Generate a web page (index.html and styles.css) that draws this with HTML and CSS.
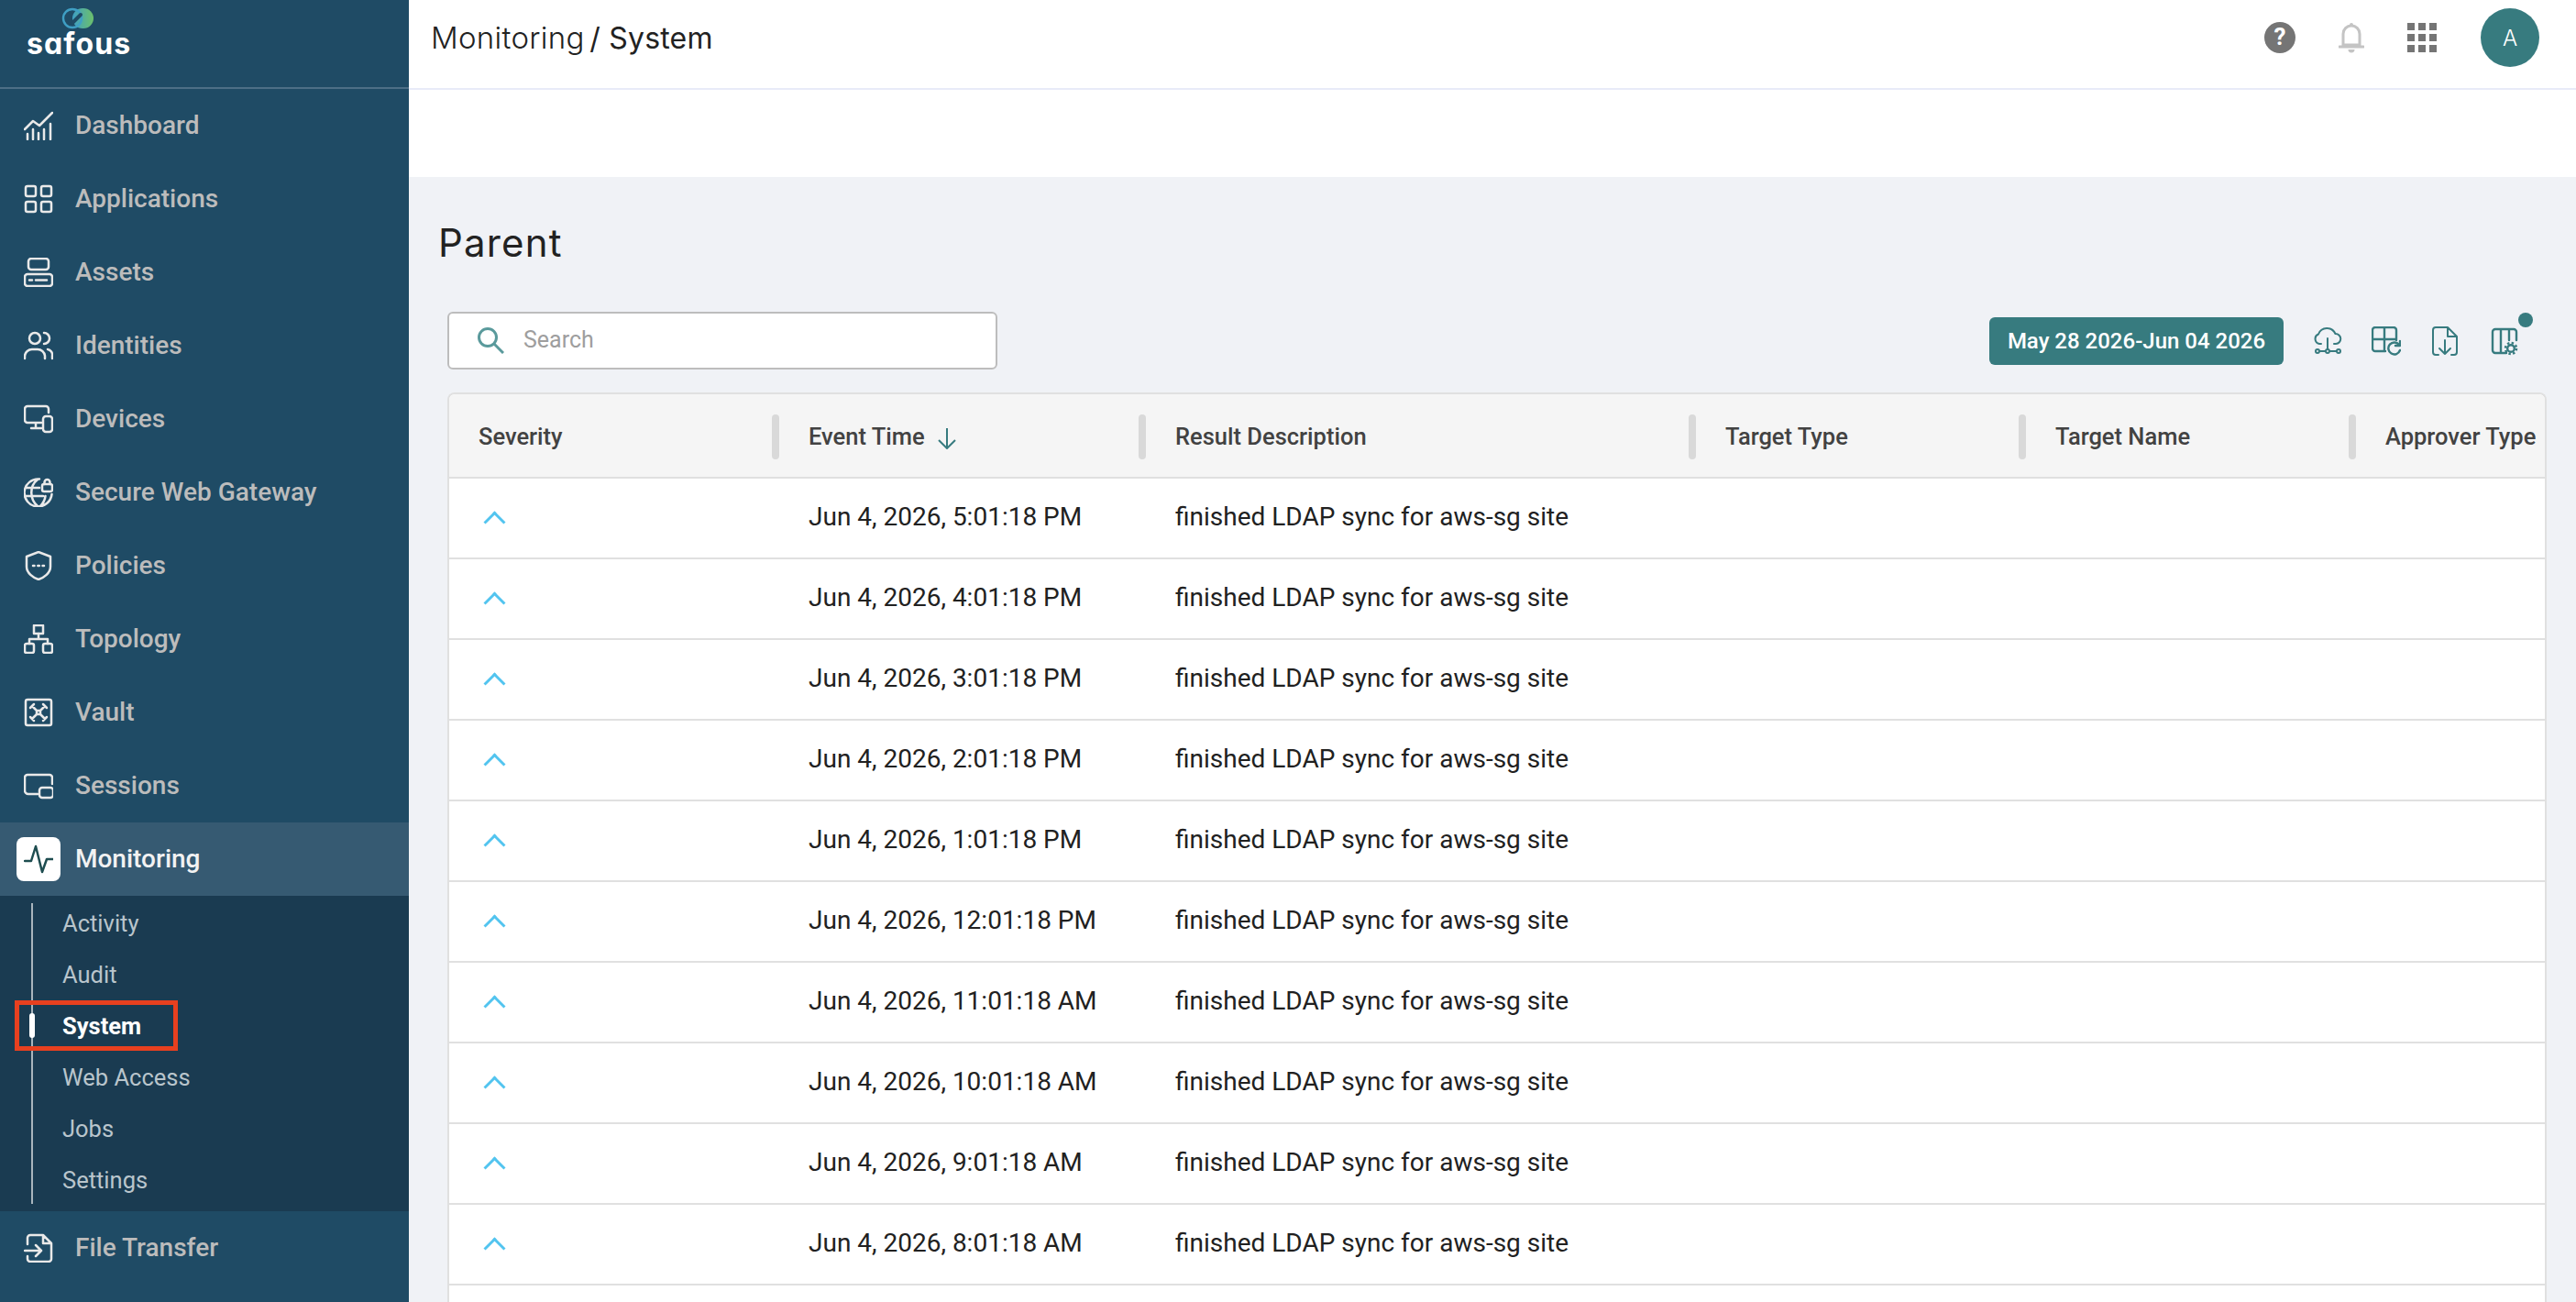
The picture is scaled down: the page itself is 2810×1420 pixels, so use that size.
FILE: index.html
```html
<!DOCTYPE html>
<html lang="en">
<head>
    <meta charset="UTF-8">
    <meta name="viewport" content="width=device-width, initial-scale=1.0">
    <title>Monitoring / System</title>
    <link rel="stylesheet" href="styles.css">
</head>
<body>
    <div class="app">
        <aside class="sidebar">
            <div class="brand">
                <svg class="brand-mark" viewBox="0 0 36 24" width="36" height="24">
                    <defs>
                        <linearGradient id="brandGrad" x1="0" y1="0" x2="1" y2="0">
                            <stop offset="0" stop-color="#3f9fc4"/>
                            <stop offset="1" stop-color="#6cc06b"/>
                        </linearGradient>
                    </defs>
                    <rect x="12" y="1" width="23" height="22" rx="11" fill="url(#brandGrad)"/>
                    <circle cx="12" cy="12" r="10" fill="none" stroke="#3f9fc4" stroke-width="2.4"/>
                    <path d="M12 17 L21 8" stroke="#1f4b65" stroke-width="4" stroke-linecap="round"/>
                </svg>
                <span class="brand-name">safous</span>
            </div>

            <nav class="nav">
                <a class="nav-item">
                    <svg class="nav-icon" viewBox="0 0 32 32"><path d="M1 20 10 11 17 16 31 2M4 25V31M10 20V31M16 24V31M22 20V31M29 14V31"/></svg>
                    Dashboard
                </a>
                <a class="nav-item">
                    <svg class="nav-icon" viewBox="0 0 32 32"><rect x="2" y="2" width="11" height="11" rx="2"/><rect x="19" y="2" width="11" height="11" rx="2"/><rect x="2" y="19" width="11" height="11" rx="2"/><rect x="19" y="19" width="11" height="11" rx="2"/></svg>
                    Applications
                </a>
                <a class="nav-item">
                    <svg class="nav-icon" viewBox="0 0 32 32"><rect x="5" y="1" width="22" height="12" rx="3"/><rect x="1" y="18" width="30" height="13" rx="3"/><path d="M6 24.500H9M13 24.500H25"/></svg>
                    Assets
                </a>
                <a class="nav-item">
                    <svg class="nav-icon" viewBox="0 0 32 32"><circle cx="12" cy="8" r="6"/><path d="M22 2a6 6 0 0 1 0 12M1 30v-3a8 8 0 0 1 8-7h6a8 8 0 0 1 8 7v3M26 20a6 6 0 0 1 5 7v3"/></svg>
                    Identities
                </a>
                <a class="nav-item">
                    <svg class="nav-icon" viewBox="0 0 32 32"><path d="M27 9V5a3 3 0 0 0-3-3H4a3 3 0 0 0-3 3v12a3 3 0 0 0 3 3h15M13 20v6M8 26h11"/><rect x="21" y="13" width="10" height="17" rx="3"/></svg>
                    Devices
                </a>
                <a class="nav-item">
                    <svg class="nav-icon" viewBox="0 0 32 32"><path d="M17 1.500A15 15 0 1 0 30.500 18M15 2C6 9 6 23 15 31M18 31c3-3 5-7 5.500-11M2 11h15M1 20h20"/><rect x="20" y="7" width="11" height="8" rx="2"/><path d="M22.500 7V5a3 3 0 0 1 6 0v2"/></svg>
                    Secure Web Gateway
                </a>
                <a class="nav-item">
                    <svg class="nav-icon" viewBox="0 0 32 32"><path d="M16 1 29 6V17C29 24 22 29 16 31 10 29 3 24 3 17V6Z"/><path d="M10 16h1.500M15.300 16h1.500M20.500 16h1.500"/></svg>
                    Policies
                </a>
                <a class="nav-item">
                    <svg class="nav-icon" viewBox="0 0 32 32"><rect x="11" y="1" width="10" height="9"/><rect x="1" y="21" width="10" height="10" rx="2"/><rect x="21" y="21" width="10" height="10" rx="2"/><path d="M16 10V16M6 21V16H26V21"/></svg>
                    Topology
                </a>
                <a class="nav-item">
                    <svg class="nav-icon" viewBox="0 0 32 32"><rect x="2" y="2" width="28" height="28" rx="2"/><path d="M9 9 14 14M23 9 18 14M9 23 14 18M23 23 18 18M7 11 11 7M21 7 25 11M7 21 11 25M21 25 25 21M14 14H18V18H14Z"/></svg>
                    Vault
                </a>
                <a class="nav-item">
                    <svg class="nav-icon" viewBox="0 0 32 32"><path d="M15 25H5a4 4 0 0 1-4-4V7a3 3 0 0 1 3-3h24a3 3 0 0 1 3 3v7"/><rect x="17" y="18" width="15" height="11" rx="3"/></svg>
                    Sessions
                </a>
                <a class="nav-item active">
                    <span class="nav-icon-box">
                        <svg class="nav-icon" viewBox="0 0 32 32"><path d="M1 18H8L13 2 20 30 25 16H32"/></svg>
                    </span>
                    Monitoring
                </a>
                <div class="sub-nav">
                    <a class="sub-item">Activity</a>
                    <a class="sub-item">Audit</a>
                    <a class="sub-item current">System<span class="callout"></span></a>
                    <a class="sub-item">Web Access</a>
                    <a class="sub-item">Jobs</a>
                    <a class="sub-item">Settings</a>
                </div>
                <a class="nav-item">
                    <svg class="nav-icon" viewBox="0 0 32 32"><path d="M4 12V5a3 3 0 0 1 3-3h14l9 9v17a3 3 0 0 1-3 3H7a3 3 0 0 1-3-3v-3M21 2v9h9M1 19H19M13 13 19 19 13 25"/></svg>
                    File Transfer
                </a>
            </nav>
        </aside>

        <div class="main">
            <header class="topbar">
                <div class="breadcrumb">Monitoring <span class="crumb-current">/ System</span></div>
                <div class="top-actions">
                    <svg class="top-icon" viewBox="0 0 34 34" width="34" height="34">
                        <circle cx="17" cy="17" r="17" fill="#757575"/>
                        <text x="17" y="25" text-anchor="middle" class="help-mark">?</text>
                    </svg>
                    <svg class="top-icon" viewBox="0 0 28 34" width="28" height="34">
                        <path d="M14 4a9 9 0 0 1 9 9v12H5V13a9 9 0 0 1 9-9Z" fill="none" stroke="#c4c4c4" stroke-width="3"/>
                        <path d="M1 27H27" stroke="#c4c4c4" stroke-width="3" stroke-linecap="round"/>
                        <rect x="12" y="1" width="4" height="4" rx="2" fill="#c4c4c4"/>
                        <path d="M10.500 30h7a3.500 3.500 0 0 1-7 0Z" fill="#c4c4c4"/>
                    </svg>
                    <div class="apps-grid">
                        <i></i><i></i><i></i><i></i><i></i><i></i><i></i><i></i><i></i>
                    </div>
                    <div class="avatar">A</div>
                </div>
            </header>
            <div class="top-strip"></div>

            <main class="content">
                <h1 class="page-title">Parent</h1>

                <div class="toolbar">
                    <label class="search">
                        <svg viewBox="0 0 30 30" width="30" height="30"><circle cx="12" cy="12" r="9.500" fill="none" stroke="#5a9a9c" stroke-width="3"/><path d="M19 19 29 29" stroke="#5a9a9c" stroke-width="3"/></svg>
                        <span class="search-text">Search</span>
                    </label>
                    <div class="tools">
                        <button class="date-btn">May 28 2026-Jun 04 2026</button>
                        <svg class="tool-icon" viewBox="0 0 32 32"><path d="M9 19H7A5.500 5.500 0 0 1 6 8.500 10 10 0 0 1 24.500 8 5.500 5.500 0 0 1 25 19H23M16 13V25M7 27H14M18 27H26"/><circle cx="5" cy="27" r="2"/><circle cx="16" cy="27" r="2"/><circle cx="28" cy="27" r="2"/></svg>
                        <svg class="tool-icon thick" viewBox="0 0 32 32"><path d="M15 27H4a3 3 0 0 1-3-3V4a3 3 0 0 1 3-3h20a3 3 0 0 1 3 3V15M1 14H27M14 1V27M30 20a6.500 6.500 0 1 0 1 6M31 16v5h-5"/></svg>
                        <svg class="tool-icon" viewBox="0 0 32 32"><path d="M9 31H6a3 3 0 0 1-3-3V4a3 3 0 0 1 3-3H19L29 11V28a3 3 0 0 1-3 3H23M19 1V11H29M16 15V30M10 24 16 30 22 24"/></svg>
                        <div class="col-settings">
                            <svg class="tool-icon thick" viewBox="0 0 32 32"><path d="M19 29H7a3 3 0 0 1-3-3V6a3 3 0 0 1 3-3H27a3 3 0 0 1 3 3V15M13 3V29M22 3V15"/><circle cx="24" cy="24" r="3.800"/><circle class="gear-teeth" cx="24" cy="24" r="6"/></svg>
                            <span class="tool-dot"></span>
                        </div>
                    </div>
                </div>

                <div class="table-card">
                    <table class="events">
                        <colgroup>
                            <col class="col-sev"><col class="col-time"><col class="col-desc"><col class="col-type"><col class="col-name"><col>
                        </colgroup>
                        <thead>
                            <tr>
                                <th>Severity</th>
                                <th>Event Time
                                    <svg class="sort-icon" viewBox="0 0 24 24" width="24" height="24"><path d="M12 1V23M3 14 12 23 21 14"/></svg>
                                </th>
                                <th>Result Description</th>
                                <th>Target Type</th>
                                <th>Target Name</th>
                                <th class="last">Approver Type</th>
                            </tr>
                        </thead>
                        <tbody>
                            <tr><td><span class="chev"></span></td><td>Jun 4, 2026, 5:01:18 PM</td><td>finished LDAP sync for aws-sg site</td><td></td><td></td><td></td></tr>
                            <tr><td><span class="chev"></span></td><td>Jun 4, 2026, 4:01:18 PM</td><td>finished LDAP sync for aws-sg site</td><td></td><td></td><td></td></tr>
                            <tr><td><span class="chev"></span></td><td>Jun 4, 2026, 3:01:18 PM</td><td>finished LDAP sync for aws-sg site</td><td></td><td></td><td></td></tr>
                            <tr><td><span class="chev"></span></td><td>Jun 4, 2026, 2:01:18 PM</td><td>finished LDAP sync for aws-sg site</td><td></td><td></td><td></td></tr>
                            <tr><td><span class="chev"></span></td><td>Jun 4, 2026, 1:01:18 PM</td><td>finished LDAP sync for aws-sg site</td><td></td><td></td><td></td></tr>
                            <tr><td><span class="chev"></span></td><td>Jun 4, 2026, 12:01:18 PM</td><td>finished LDAP sync for aws-sg site</td><td></td><td></td><td></td></tr>
                            <tr><td><span class="chev"></span></td><td>Jun 4, 2026, 11:01:18 AM</td><td>finished LDAP sync for aws-sg site</td><td></td><td></td><td></td></tr>
                            <tr><td><span class="chev"></span></td><td>Jun 4, 2026, 10:01:18 AM</td><td>finished LDAP sync for aws-sg site</td><td></td><td></td><td></td></tr>
                            <tr><td><span class="chev"></span></td><td>Jun 4, 2026, 9:01:18 AM</td><td>finished LDAP sync for aws-sg site</td><td></td><td></td><td></td></tr>
                            <tr><td><span class="chev"></span></td><td>Jun 4, 2026, 8:01:18 AM</td><td>finished LDAP sync for aws-sg site</td><td></td><td></td><td></td></tr>
                        </tbody>
                    </table>
                </div>
            </main>
        </div>
    </div>
</body>
</html>
```

FILE: styles.css
```css
:root {
    --sidebar-color: #1f4b65;
    --sidebar-active: #365a72;
    --sidebar-sub: #1a3b51;
    --teal: #377b7f;
    --page-bg: #f0f2f6;
    --line: #e0e0e0;
}

* {
    margin: 0;
    padding: 0;
    box-sizing: border-box;
    font-family: 'Roboto', 'Liberation Sans', sans-serif;
}

html, body {
    height: 100%;
    overflow: hidden;
}

.app {
    display: flex;
    height: 1420px;
    overflow: hidden;
}

/* sidebar */
.sidebar {
    width: 446px;
    flex-shrink: 0;
    background: var(--sidebar-color);
}

.brand {
    height: 97px;
    border-bottom: 2px solid #4d6f86;
    display: flex;
    flex-direction: column;
    align-items: flex-start;
    padding: 8px 0 0 29px;
}

.brand-mark {
    margin-left: 38px;
}

.brand-name {
    color: #fff;
    font-family: 'Inter', sans-serif;
    font-feature-settings: 'cv11';
    font-size: 32px;
    font-weight: 700;
    line-height: 32px;
    letter-spacing: 1.100px;
}

.nav-item {
    height: 80px;
    display: flex;
    align-items: center;
    gap: 24px;
    padding: 0 0 2px 26px;
    color: #bcbcbc;
    font-size: 28px;
    font-weight: 500;
}

.nav-icon {
    width: 32px;
    height: 32px;
    flex-shrink: 0;
    fill: none;
    stroke: #e9e9e9;
    stroke-width: 2.500;
    stroke-linecap: round;
    stroke-linejoin: round;
    position: relative;
    top: 1px;
}

.nav-item.active {
    background: var(--sidebar-active);
    color: #f2f2f2;
    padding: 0 0 2px 18px;
    gap: 16px;
}

.nav-icon-box {
    position: relative;
    top: 1px;
    width: 48px;
    height: 48px;
    background: #fff;
    border-radius: 8px;
    display: flex;
    align-items: center;
    justify-content: center;
}

.nav-icon-box .nav-icon {
    stroke: #1e4d50;
    top: 0;
}

.sub-nav {
    position: relative;
    background: var(--sidebar-sub);
    padding: 2px 0;
    height: 344px;
}

.sub-nav::before {
    content: '';
    position: absolute;
    left: 34px;
    top: 8px;
    bottom: 8px;
    width: 2px;
    background: #a9b5bd;
}

.sub-item {
    position: relative;
    display: flex;
    align-items: center;
    height: 56px;
    padding-left: 68px;
    color: #b9c5cc;
    font-size: 25.500px;
}

.sub-item.current {
    color: #fff;
    font-weight: 700;
}

.sub-item.current::before {
    content: '';
    position: absolute;
    left: 32px;
    top: 14px;
    width: 6px;
    height: 27px;
    border-radius: 3px;
    background: #fff;
}

.callout {
    position: absolute;
    left: 16px;
    top: 0;
    width: 178px;
    height: 55px;
    border: 5px solid #e8401f;
}

/* top bar */
.main {
    flex: 1;
    min-width: 0;
    display: flex;
    flex-direction: column;
    background: var(--page-bg);
}

.topbar {
    height: 98px;
    flex-shrink: 0;
    background: #fff;
    border-bottom: 2px solid #e8ebf8;
    display: flex;
    align-items: center;
    justify-content: space-between;
    padding: 0 40px 14px 24px;
}

.breadcrumb {
    font-family: 'Inter', sans-serif;
    font-size: 33px;
    font-weight: 300;
    color: #222;
    letter-spacing: 0.300px;
    word-spacing: -4px;
}

.crumb-current {
    font-family: 'Inter', sans-serif;
    font-size: 32px;
    font-weight: 400;
    letter-spacing: 0.200px;
    word-spacing: 0;
}

.top-actions {
    display: flex;
    align-items: center;
}

.top-icon {
    margin-right: 47px;
}

.help-mark {
    font-family: 'Roboto', sans-serif;
    font-size: 26px;
    font-weight: 700;
    fill: #fff;
}

.apps-grid {
    display: grid;
    grid-template-columns: repeat(3, 8px);
    grid-auto-rows: 8px;
    gap: 4px;
    margin-right: 48px;
}

.apps-grid i {
    background: #757575;
}

.avatar {
    width: 64px;
    height: 64px;
    border-radius: 50%;
    background: var(--teal);
    color: #fff;
    font-family: 'Inter', sans-serif;
    font-size: 24px;
    font-weight: 300;
    display: flex;
    align-items: center;
    justify-content: center;
}

.top-strip {
    height: 95px;
    flex-shrink: 0;
    background: #fff;
}

/* content */
.content {
    flex: 1;
    min-height: 0;
    display: flex;
    flex-direction: column;
    padding: 46px 32px 0 32px;
}

.page-title {
    font-family: 'Inter', sans-serif;
    font-size: 42px;
    font-weight: 400;
    line-height: 52px;
    letter-spacing: 1.200px;
    color: #222;
}

.toolbar {
    display: flex;
    align-items: flex-start;
    justify-content: space-between;
    margin: 49px 0 25px 10px;
    height: 63px;
}

.search {
    width: 600px;
    height: 63px;
    background: #fff;
    border: 2px solid #bdbdbd;
    border-radius: 6px;
    display: flex;
    align-items: center;
    gap: 21px;
    padding: 0 0 2px 30px;
}

.search-text {
    color: #9e9e9e;
    font-size: 25px;
}

.tools {
    display: flex;
    align-items: center;
    gap: 32px;
    padding: 6px 31px 0 0;
}

.date-btn {
    width: 321px;
    height: 52px;
    border: 0;
    border-radius: 6px;
    background: var(--teal);
    color: #fff;
    font-size: 24px;
    font-weight: 500;
}

.tool-icon {
    display: block;
    width: 32px;
    height: 32px;
    fill: none;
    stroke: var(--teal);
    stroke-width: 2;
    stroke-linecap: round;
    stroke-linejoin: round;
}

.tool-icon.thick {
    stroke-width: 2.400;
}

.tool-icon .gear-teeth {
    stroke-width: 2.500;
    stroke-dasharray: 2.400 2.300;
    stroke-linecap: butt;
}

.col-settings {
    position: relative;
}

.tool-dot {
    position: absolute;
    right: -16px;
    top: -15px;
    width: 16px;
    height: 16px;
    border-radius: 50%;
    background: var(--teal);
}

/* table */
.table-card {
    flex: 1;
    margin-left: 10px;
    background: #fff;
    border: 2px solid var(--line);
    border-bottom: 0;
    border-radius: 8px 8px 0 0;
    overflow: hidden;
}

.events {
    width: 100%;
    table-layout: fixed;
    border-collapse: collapse;
}

.col-sev { width: 360px; }
.col-time { width: 400px; }
.col-desc { width: 600px; }
.col-type { width: 360px; }
.col-name { width: 360px; }

.events th {
    position: relative;
    height: 91px;
    padding: 2px 0 0 32px;
    background: #f5f5f5;
    border-bottom: 2px solid var(--line);
    box-shadow: 0 6px 12px rgba(0,0,0,0.05);
    color: #424242;
    font-size: 25.500px;
    font-weight: 500;
    text-align: left;
    white-space: nowrap;
}

.events th::after {
    content: '';
    position: absolute;
    right: 0;
    top: 22px;
    width: 8px;
    height: 49px;
    border-radius: 4px;
    background: #d9d9d9;
}

.events th.last::after {
    display: none;
}

.sort-icon {
    vertical-align: -5px;
    margin-left: 6px;
    fill: none;
    stroke: var(--teal);
    stroke-width: 2;
}

.events td {
    height: 88px;
    padding: 0 0 3px 32px;
    border-bottom: 2px solid var(--line);
    color: #212121;
    font-size: 28px;
    white-space: nowrap;
}

.chev {
    display: block;
    width: 17px;
    height: 17px;
    margin: 12px 0 0 9px;
    border-top: 3px solid #52c4ef;
    border-left: 3px solid #52c4ef;
    transform: rotate(45deg);
}
```
